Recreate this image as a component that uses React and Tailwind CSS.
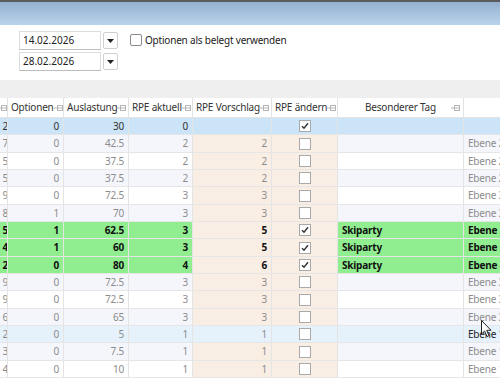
import React from 'react';

const cols = [
  { key: 'c0', w: 'w-[8px]', title: '' },
  { key: 'opt', w: 'w-[56px]', title: 'Optionen' },
  { key: 'aus', w: 'w-[65px]', title: 'Auslastung' },
  { key: 'akt', w: 'w-[64px]', title: 'RPE aktuell' },
  { key: 'vor', w: 'w-[79px]', title: 'RPE Vorschlag' },
  { key: 'and', w: 'w-[66px]', title: 'RPE ändern' },
  { key: 'tag', w: 'w-[126px]', title: 'Besonderer Tag' },
];

// kind: sel = selected, green = special day, hover = mouse over
const rows = [
  { c0: '2', opt: 0, aus: '30', akt: 0, vor: '', chk: true, tag: '', eb: '', kind: 'sel' },
  { c0: '7', opt: 0, aus: '42.5', akt: 2, vor: 2, chk: false, tag: '', eb: 'Ebene 2' },
  { c0: '5', opt: 0, aus: '37.5', akt: 2, vor: 2, chk: false, tag: '', eb: 'Ebene 2' },
  { c0: '5', opt: 0, aus: '37.5', akt: 2, vor: 2, chk: false, tag: '', eb: 'Ebene 2' },
  { c0: '9', opt: 0, aus: '72.5', akt: 3, vor: 3, chk: false, tag: '', eb: 'Ebene 3' },
  { c0: '8', opt: 1, aus: '70', akt: 3, vor: 3, chk: false, tag: '', eb: 'Ebene 3' },
  { c0: '5', opt: 1, aus: '62.5', akt: 3, vor: 5, chk: true, tag: 'Skiparty', eb: 'Ebene 3', kind: 'green' },
  { c0: '4', opt: 1, aus: '60', akt: 3, vor: 5, chk: true, tag: 'Skiparty', eb: 'Ebene 3', kind: 'green' },
  { c0: '2', opt: 0, aus: '80', akt: 4, vor: 6, chk: true, tag: 'Skiparty', eb: 'Ebene 4', kind: 'green' },
  { c0: '9', opt: 0, aus: '72.5', akt: 3, vor: 3, chk: false, tag: '', eb: 'Ebene 3' },
  { c0: '9', opt: 0, aus: '72.5', akt: 3, vor: 3, chk: false, tag: '', eb: 'Ebene 3' },
  { c0: '6', opt: 0, aus: '65', akt: 3, vor: 3, chk: false, tag: '', eb: 'Ebene 3' },
  { c0: '2', opt: 0, aus: '5', akt: 1, vor: 1, chk: false, tag: '', eb: 'Ebene 1', kind: 'hover' },
  { c0: '3', opt: 0, aus: '7.5', akt: 1, vor: 1, chk: false, tag: '', eb: 'Ebene 1' },
  { c0: '4', opt: 0, aus: '10', akt: 1, vor: 1, chk: false, tag: '', eb: 'Ebene 1' },
];

function Pin() {
  return (
    <svg width="9" height="6" viewBox="0 0 9 6" className="shrink-0">
      <line x1="0" y1="3" x2="3" y2="3" stroke="#b5b5b5" />
      <rect x="3.5" y="0.5" width="5" height="5" fill="none" stroke="#b5b5b5" />
      <line x1="3.5" y1="3" x2="8.5" y2="3" stroke="#b5b5b5" />
    </svg>
  );
}

function Check({ on }) {
  return (
    <div className="w-[12px] h-[12px] border border-[#a9a9a9] bg-white flex items-center justify-center">
      {on && (
        <svg width="8" height="8" viewBox="0 0 8 8">
          <path d="M1 4.2 L3 6.3 L7 1.2" fill="none" stroke="#333" strokeWidth="1.4" />
        </svg>
      )}
    </div>
  );
}

function DateBox({ value }) {
  return (
    <div className="flex items-center gap-[2px]">
      <div className="w-[82px] h-[19px] border border-[#dcdcdc] border-b-[#bdbdbd] bg-white flex items-center pl-[3px] text-[10px] tracking-normal text-[#222]">
        {value}
      </div>
      <div className="w-[15px] h-[17px] border border-[#cfcfcf] rounded-[2px] bg-white flex items-center justify-center">
        <svg width="7" height="4" viewBox="0 0 7 4">
          <path d="M0 0 L7 0 L3.5 4 Z" fill="#222" />
        </svg>
      </div>
    </div>
  );
}

export default function App() {
  return (
    <div className="w-[500px] h-[383px] overflow-hidden bg-white relative font-['Noto_Sans','Open_Sans',sans-serif] tracking-[-0.2px]">
      <div className="h-[2px] bg-[#5b5b5b]" />
      <div className="h-[23px] bg-gradient-to-b from-[#95b0cf] to-[#bad4ec]" />

      {/* filter area */}
      <div className="h-[55px] flex gap-[12px] pl-[19px] pt-[6px]">
        <div className="flex flex-col gap-[2px]">
          <DateBox value="14.02.2026" />
          <DateBox value="28.02.2026" />
        </div>
        <div className="flex items-start gap-[3px] pt-[2px]">
          <div className="w-[12px] h-[12px] mt-[1px] border border-[#8a8a8a] rounded-[2px] bg-white" />
          <span className="text-[10px] leading-[14px] text-[#222]">Optionen als belegt verwenden</span>
        </div>
      </div>

      <div className="h-[18px] bg-[#efefef]" />

      {/* header */}
      <div className="flex h-[20px] border-b border-[#e2e2e2] bg-white text-[10px] text-[#333]">
        {cols.map((c) => (
          <div
            key={c.key}
            className={`${c.w} shrink-0 border-r border-[#e2e2e2] flex items-center px-[3px] ${c.key === 'tag' ? 'justify-center relative' : 'justify-between'} ${c.key === 'c0' ? 'overflow-hidden justify-end !px-0' : ''}`}
          >
            <span className="whitespace-nowrap">{c.title}</span>
            {c.key === 'tag' ? (
              <span className="absolute right-[3px] top-[7px]"><Pin /></span>
            ) : (
              <Pin />
            )}
          </div>
        ))}
        <div className="flex-1" />
      </div>

      {/* rows */}
      {rows.map((r, i) => {
        const alt = i % 2 === 1;
        const base =
          r.kind === 'sel' ? 'bg-[#cce4f7]' :
          r.kind === 'green' ? 'bg-[#90ee90]' :
          r.kind === 'hover' ? 'bg-[#e5f1fb]' :
          alt ? 'bg-[#f5f6fc]' : 'bg-white';
        const peach =
          r.kind === 'sel' ? 'bg-[#cce4f7]' :
          r.kind === 'hover' ? 'bg-[#e5f1fb]' : 'bg-[#f9eee4]';
        const txt =
          r.kind === 'green' ? 'text-[#111] font-bold' :
          r.kind === 'sel' ? 'text-[#333]' : 'text-[#8c8c8c]';
        const h = i % 3 === 1 ? 'h-[18px]' : 'h-[17px]';
        const cell = 'shrink-0 border-r border-[#e4e4e4] flex items-center px-[4px]';
        return (
          <div key={i} className={`flex ${h} border-b border-[#e6e6e6] text-[10px] ${txt}`}>
            <div className={`w-[8px] ${cell} ${base} justify-end !px-0 overflow-hidden`}>
              <span className="-mr-[1px]">{r.c0}</span>
            </div>
            <div className={`w-[56px] ${cell} ${base} justify-end`}>{r.opt}</div>
            <div className={`w-[65px] ${cell} ${base} justify-end`}>{r.aus}</div>
            <div className={`w-[64px] ${cell} ${base} justify-end`}>{r.akt}</div>
            <div className={`w-[79px] ${cell} ${peach} justify-end`}>{r.vor}</div>
            <div className={`w-[66px] ${cell} ${peach} justify-center`}>
              <Check on={r.chk} />
            </div>
            <div className={`w-[126px] ${cell} ${base}`}>{r.tag}</div>
            <div className={`flex-1 flex items-center px-[4px] whitespace-nowrap overflow-hidden ${base} ${r.kind === 'hover' ? 'text-[#222]' : ''}`}>
              {r.eb}
            </div>
          </div>
        );
      })}

      {/* mouse pointer */}
      <svg className="absolute left-[481px] top-[320px]" width="12" height="18" viewBox="0 0 12 18">
        <path d="M0.5 0.5 L0.5 14 L3.6 11 L6 16.5 L8 15.6 L5.7 10.3 L10 10.3 Z" fill="#fff" stroke="#222" strokeWidth="1" />
      </svg>
    </div>
  );
}
